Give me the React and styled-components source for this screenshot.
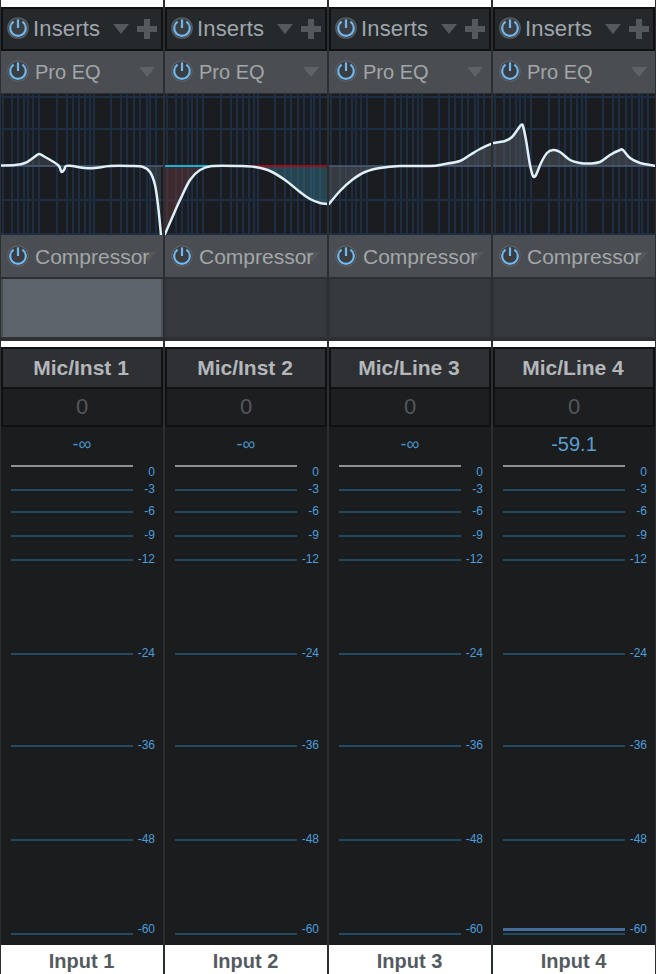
import React from "react";
import styled, { createGlobalStyle } from "styled-components";

const GlobalStyle = createGlobalStyle`
  html, body {
    margin: 0;
    padding: 0;
    background: #fff;
  }
  * {
    box-sizing: border-box;
  }
`;

const Mixer = styled.div`
  display: grid;
  grid-template-columns: repeat(4, 164px);
  width: 656px;
  height: 974px;
  overflow: hidden;
  font-family: "Liberation Sans", Arial, sans-serif;
`;

const Strip = styled.div`
  display: flex;
  flex-direction: column;
  height: 974px;
  border-left: 1px solid #2c2f32;
  border-right: 1px solid #2c2f32;
`;

const WhiteGap = styled.div`
  height: ${(p) => p.$h}px;
  flex: none;
  background: #fff;
`;

const InsertsRow = styled.div`
  display: flex;
  align-items: center;
  height: 44px;
  flex: none;
  padding: 0 4px;
  background: #26292c;
  border: 2px solid #101113;
`;

const PluginRow = styled.div`
  display: flex;
  align-items: center;
  height: ${(p) => p.$h}px;
  flex: none;
  padding-left: 6px;
  padding-top: ${(p) => (p.$edge - 1) * 2}px;
  background: #4a4e52;
  border-bottom: ${(p) => p.$edge}px solid #2d3033;
`;

const PowerIcon = styled.svg`
  flex: none;
  width: 22px;
  height: 22px;
  margin-top: -2px;
`;

const InsertsLabel = styled.span`
  margin-left: 4px;
  font-size: 22px;
  letter-spacing: 0.15px;
  color: #9fa6ac;
`;

const PluginLabel = styled.span`
  position: relative;
  z-index: 1;
  flex: none;
  margin-left: 6px;
  font-size: ${(p) => p.$size}px;
  white-space: nowrap;
  color: #a3a6a8;
`;

const Caret = styled.span`
  flex: none;
  width: 0;
  height: 0;
  margin-left: ${(p) => p.$left}px;
  border-left: 8px solid transparent;
  border-right: 8px solid transparent;
  border-top: 10px solid ${(p) => p.$color};
`;

const Plus = styled.span`
  flex: none;
  width: 20px;
  height: 20px;
  margin-left: 8px;
  background:
    linear-gradient(#55595c, #55595c) center / 20px 6px no-repeat,
    linear-gradient(#55595c, #55595c) center / 6px 20px no-repeat;
`;

const EqView = styled.svg`
  display: block;
  flex: none;
  width: 162px;
  height: 141px;
  background: #1a1c1f;
`;

const InsertSlot = styled.div`
  flex: none;
  height: 58px;
  background: ${(p) => (p.$active ? "#5d646b" : "#36393d")};
  border-left: 2px solid ${(p) => (p.$active ? "#4a4f54" : "#323539")};
  border-right: 2px solid ${(p) => (p.$active ? "#4a4f54" : "#323539")};
`;

const SlotEdge = styled.div`
  flex: none;
  height: 4px;
  background: #2d3033;
`;

const NameBox = styled.div`
  display: flex;
  align-items: center;
  justify-content: center;
  flex: none;
  height: 42px;
  padding-right: 2px;
  font-size: 21px;
  font-weight: 700;
  color: #b4b7ba;
  background: #2e3034;
  border: 2px solid #101113;
`;

const GainBox = styled.div`
  display: flex;
  align-items: center;
  justify-content: center;
  flex: none;
  height: 40px;
  margin-top: -2px;
  font-size: 22px;
  color: #54575a;
  background: #1c1e20;
  border: 2px solid #101113;
`;

const Meter = styled.div`
  position: relative;
  flex: none;
  height: 518px;
  background: #1a1c1e;
`;

const Readout = styled.div`
  display: flex;
  align-items: center;
  justify-content: center;
  height: 38px;
  padding-bottom: 4px;
  font-size: ${(p) => (p.$live ? 20 : 18)}px;
  color: ${(p) => (p.$live ? "#5a9dcf" : "#4a8fc4")};
`;

const MarkRow = styled.div`
  display: flex;
  align-items: flex-start;
  height: ${(p) => p.$h}px;
  padding-left: 10px;
`;

const MarkLine = styled.div`
  flex: none;
  width: 122px;
  height: 2px;
  background: ${(p) => (p.$top ? "#8c9296" : "#234a63")};
`;

const MarkLabel = styled.span`
  flex: none;
  width: 22px;
  height: 14px;
  margin-top: ${(p) => p.$shift - 7}px;
  font-size: 12px;
  line-height: 14px;
  text-align: right;
  color: #4d9ddb;
`;

// the live signal sits over the -60 mark
const LevelBar = styled.div`
  position: absolute;
  left: 10px;
  bottom: 14px;
  width: 122px;
  height: 3px;
  background: #466c9a;
`;

const InputLabel = styled.div`
  display: flex;
  align-items: center;
  justify-content: center;
  flex: 1;
  padding-top: 3px;
  padding-right: 1px;
  font-size: 20px;
  font-weight: 700;
  color: #555a60;
  background: #fff;
`;

const GRID_X = [3, 12, 18, 24, 28, 33, 39, 57, 67, 73, 79, 85, 90, 94, 111, 121, 127, 134, 140, 147, 150, 156];
const GRID_Y = [3, 35, 72, 106, 140];

const marks = [
  { db: "0", h: 24, shift: 7, top: true },
  { db: "-3", h: 22, shift: 0 },
  { db: "-6", h: 24, shift: 0 },
  { db: "-9", h: 24, shift: 0 },
  { db: "-12", h: 94, shift: 0 },
  { db: "-24", h: 92, shift: 0 },
  { db: "-36", h: 94, shift: 0 },
  { db: "-48", h: 94, shift: 0 },
  { db: "-60", h: 12, shift: -4 },
];

// eq curves, local to each strip's graph
const strips = [
  {
    name: "Mic/Inst 1",
    input: "Input 1",
    active: true,
    readout: "-∞",
    curve: [[0, 71.5], [15, 71], [25, 69], [33, 64], [39, 60], [45, 63], [52, 67], [58, 71], [60, 74], [61.5, 78], [64, 76], [66, 72], [72, 72], [85, 74], [95, 74], [110, 72], [130, 72], [143, 73], [150, 78], [155, 91], [158, 111], [161, 141]],
    fills: [{ from: 0, to: 163, color: "#5a6066", opacity: 0.35 }],
  },
  {
    name: "Mic/Inst 2",
    input: "Input 2",
    readout: "-∞",
    shift: 1,
    curve: [[0, 140], [7, 124], [15, 106], [25, 86], [35, 76], [47, 72], [75, 72], [90, 73], [105, 77], [120, 86], [135, 98], [145, 105], [155, 109], [162, 110]],
    fills: [
      { from: 0, to: 62, color: "#6b3b3d", opacity: 0.45 },
      { from: 62, to: 162, color: "#3c7f92", opacity: 0.42 },
    ],
    rails: [
      { from: 0, to: 46, color: "#17b3d2" },
      { from: 78, to: 162, color: "#9a0f1e" },
    ],
  },
  {
    name: "Mic/Line 3",
    input: "Input 3",
    readout: "-∞",
    shift: 1,
    curve: [[0, 110], [11, 97], [23, 86], [36, 78], [51, 74], [71, 72], [101, 72], [116, 70], [131, 67], [141, 61], [151, 55], [162, 50]],
    fills: [{ from: 0, to: 162, color: "#5a6066", opacity: 0.45 }],
  },
  {
    name: "Mic/Line 4",
    input: "Input 4",
    readout: "-59.1",
    live: true,
    shift: 1,
    curve: [[0, 49], [12, 47], [19, 43], [25, 35], [28, 31], [30, 32], [33, 46], [37, 71], [40, 82], [43, 81], [48, 69], [54, 59], [60, 56], [67, 58], [77, 66], [87, 69], [97, 69.5], [107, 68], [117, 61], [127, 56], [130, 56], [137, 64], [147, 69], [157, 71], [163, 72]],
    fills: [{ from: 0, to: 163, color: "#5a6066", opacity: 0.45 }],
  },
];

// catmull-rom through the hand picked points
function smoothPath(pts) {
  let d = `M${pts[0][0]} ${pts[0][1]}`;
  for (let i = 0; i < pts.length - 1; i++) {
    const p0 = pts[i - 1] || pts[i];
    const p1 = pts[i];
    const p2 = pts[i + 1];
    const p3 = pts[i + 2] || p2;
    const c1x = p1[0] + (p2[0] - p0[0]) / 6;
    const c1y = p1[1] + (p2[1] - p0[1]) / 6;
    const c2x = p2[0] - (p3[0] - p1[0]) / 6;
    const c2y = p2[1] - (p3[1] - p1[1]) / 6;
    d += ` C${c1x.toFixed(1)} ${c1y.toFixed(1)} ${c2x.toFixed(1)} ${c2y.toFixed(1)} ${p2[0]} ${p2[1]}`;
  }
  return d;
}

function Power() {
  return (
    <PowerIcon viewBox="0 0 22 22">
      <circle cx="11" cy="11" r="10.8" fill="#5b5f63" />
      <circle cx="11" cy="11" r="9.6" fill="#3a3d41" />
      <path
        d="M6.6 4.7 A7.8 7.8 0 1 0 15.4 4.7"
        fill="none"
        stroke="#70b8ee"
        strokeWidth="2.2"
      />
      <path d="M11 2.4 V11" stroke="#70b8ee" strokeWidth="2.2" />
    </PowerIcon>
  );
}

function EqGraph({ curve, fills, rails, shift = 0, id }) {
  const line = smoothPath(curve);
  const last = curve[curve.length - 1];
  const area = `${line} L${last[0]} 72 L${curve[0][0]} 72 Z`;
  return (
    <EqView viewBox="1 0 162 141">
      <defs>
        {fills.map((f, i) => (
          <clipPath key={i} id={`${id}-${i}`}>
            <rect x={f.from} y="0" width={f.to - f.from} height="141" />
          </clipPath>
        ))}
      </defs>
      {GRID_X.map((x) => (
        <line key={x} x1={x} x2={x} y1="0" y2="141" stroke="#1c2d44" strokeWidth="2" />
      ))}
      {GRID_Y.map((y) => (
        <line key={y} x1="0" x2="164" y1={y} y2={y} stroke="#1d2d42" strokeWidth="2" />
      ))}
      <line x1="0" x2="164" y1="72" y2="72" stroke="#3a4f6b" strokeWidth="2" />
      <g transform={`translate(${shift} 0)`}>
        {fills.map((f, i) => (
          <path
            key={i}
            d={area}
            fill={f.color}
            opacity={f.opacity}
            clipPath={`url(#${id}-${i})`}
          />
        ))}
        {rails &&
          rails.map((r) => (
            <line key={r.from} x1={r.from} x2={r.to} y1="72" y2="72" stroke={r.color} strokeWidth="2" />
          ))}
        <path d={line} fill="none" stroke="#dff0f8" strokeWidth="2.5" strokeLinecap="round" />
      </g>
    </EqView>
  );
}

function ChannelStrip({ strip, index }) {
  return (
    <Strip>
      <WhiteGap $h={7} />
      <InsertsRow>
        <Power />
        <InsertsLabel>Inserts</InsertsLabel>
        <Caret $left={13} $color="#55595c" />
        <Plus />
      </InsertsRow>
      <PluginRow $h={43} $edge={1}>
        <Power />
        <PluginLabel $size={20}>Pro EQ</PluginLabel>
        <Caret $left={38} $color="#5e6367" />
      </PluginRow>
      <EqGraph
        curve={strip.curve}
        fills={strip.fills}
        rails={strip.rails}
        shift={strip.shift}
        id={`eq${index}`}
      />
      <PluginRow $h={44} $edge={2}>
        <Power />
        <PluginLabel $size={21}>Compressor</PluginLabel>
        <Caret $left={-9} $color="#55595d" />
      </PluginRow>
      <InsertSlot $active={strip.active} />
      <SlotEdge />
      <WhiteGap $h={6} />
      <NameBox>{strip.name}</NameBox>
      <GainBox>0</GainBox>
      <Meter>
        <Readout $live={strip.live}>{strip.readout}</Readout>
        {marks.map((m) => (
          <MarkRow key={m.db} $h={m.h}>
            <MarkLine $top={m.top} />
            <MarkLabel $shift={m.shift}>{m.db}</MarkLabel>
          </MarkRow>
        ))}
        {strip.live && <LevelBar />}
      </Meter>
      <InputLabel>{strip.input}</InputLabel>
    </Strip>
  );
}

export default function App() {
  return (
    <>
      <GlobalStyle />
      <Mixer>
        {strips.map((s, i) => (
          <ChannelStrip key={s.name} strip={s} index={i} />
        ))}
      </Mixer>
    </>
  );
}
